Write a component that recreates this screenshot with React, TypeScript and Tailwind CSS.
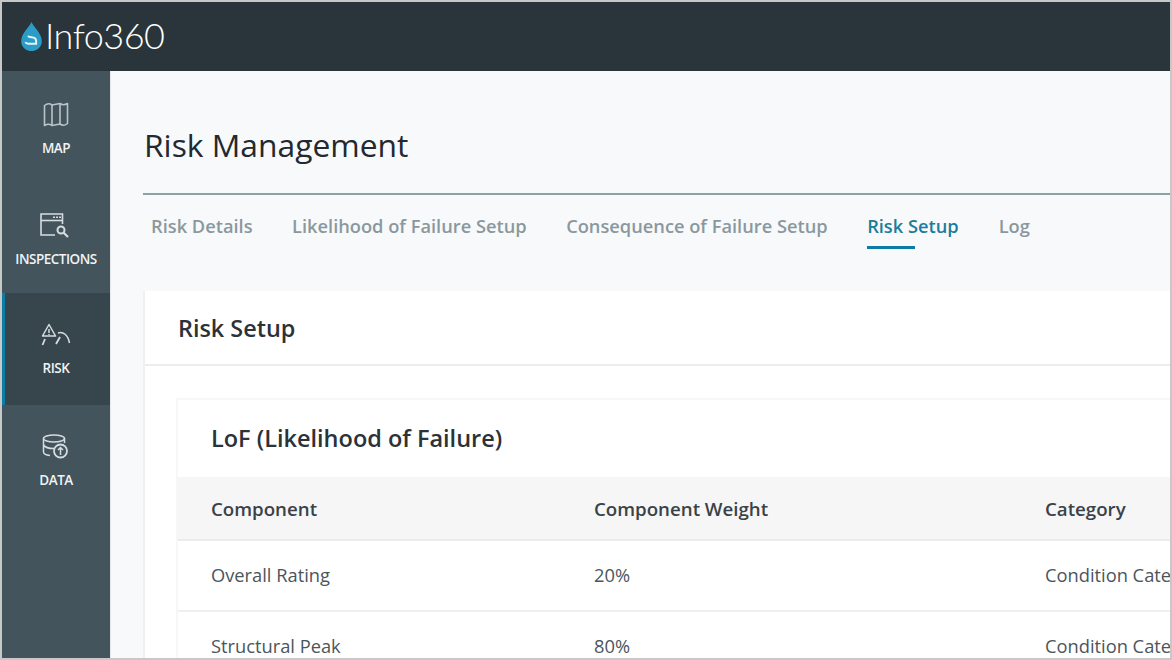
import type { ReactNode } from "react";

const font = { fontFamily: '"Open Sans", "Noto Sans", sans-serif' };

function Drop() {
  return (
    <svg width="23" height="31" viewBox="0 0 22 30" className="shrink-0">
      <path d="M11 1C9 6 1 12 1 19.5C1 25 5.5 29 11 29C16.500 29 21 25 21 19.500C21 12 13 6 11 1Z" fill="#2a9cc6" />
      <path d="M7.500 14.500C9 16 11 15.500 13 16C15 16.500 15.500 18 15.500 19.500V22H8C6.500 22 5.500 21.500 5 20.500" fill="none" stroke="#e8f3f7" strokeWidth="1.800" />
    </svg>
  );
}

function MapIcon() {
  return (
    <svg width="26" height="26" viewBox="0 0 26 26" fill="none" stroke="#b9c4c8" strokeWidth="1.600">
      <path d="M1.500 3.500C4 1.500 7 1.500 9 3L17 1.500C19 3 22 3 24.500 1.500V21.500C22 23.500 19 23.500 17 22L9 23.500C7 22 4 22 1.500 23.500Z" strokeLinejoin="round" />
      <path d="M9 3V23.500M17 1.500V22" />
    </svg>
  );
}

function InspectIcon() {
  return (
    <svg width="30" height="26" viewBox="0 0 30 26" fill="none" stroke="#d5dcdf" strokeWidth="1.600" className="-translate-x-[1px]">
      <path d="M22.500 11V1H1V22H15" />
      <path d="M1 7.500H22.500" />
      <path d="M13 4.200H21" strokeDasharray="2 1" />
      <circle cx="21" cy="17" r="3.500" strokeWidth="2" />
      <path d="M23.500 19.500L28 24" strokeWidth="2.200" />
    </svg>
  );
}

function RiskIcon() {
  return (
    <svg width="30" height="24" viewBox="0 0 30 24" fill="none" stroke="#d5dcdf" strokeWidth="1.500">
      <path d="M8 1.500L14.500 13H1.500Z" strokeLinejoin="round" />
      <path d="M8 6V10M8 11V12" />
      <path d="M17 10C22 8 27 12 28.500 20" />
      <path d="M4 16L1.500 22M19 14L15 21" strokeWidth="1.800" />
    </svg>
  );
}

function DataIcon() {
  return (
    <svg width="28" height="26" viewBox="0 0 28 26" fill="none" stroke="#d5dcdf" strokeWidth="1.500">
      <ellipse cx="12" cy="4.500" rx="10.500" ry="3.500" />
      <path d="M1.500 4.500V18C1.500 19.500 4 21 8 21.500M22.500 4.500V9" />
      <path d="M1.500 11C3 13.500 7 14.500 12 14.500" />
      <circle cx="18.500" cy="17" r="6.500" strokeWidth="1.800" />
      <path d="M18.500 21V14M16 16L18.500 13.500L21 16" />
    </svg>
  );
}

function NavItem({ icon, label, active, className }: { icon: ReactNode; label: string; active?: boolean; className: string }) {
  return (
    <div className={`flex flex-col items-center border-l-[3px] ${active ? "border-[#0b7da6] bg-[#37464d]" : "border-transparent"} ${className}`}>
      <div className="flex h-[26px] items-center pr-[3px]">{icon}</div>
      <span className="mt-[11px] pr-[3px] text-[13.500px] leading-[18px] font-semibold tracking-[-0.5px] text-[#f0f3f4]">{label}</span>
    </div>
  );
}

const tabs = ["Risk Details", "Likelihood of Failure Setup", "Consequence of Failure Setup", "Risk Setup", "Log"];

function Row({ a, b, c, header }: { a: string; b: string; c: string; header?: boolean }) {
  return (
    <div
      className={
        header
          ? "flex h-[64px] shrink-0 items-center border-b-2 border-[#ececec] bg-[#f6f6f6] pt-[2px] text-[18.700px] font-semibold text-[#3a4248]"
          : "flex h-[71px] shrink-0 items-center border-b-2 border-[#f0f0f0] pb-[1px] text-[18.300px] text-[#4c555c]"
      }
    >
      <div className="w-[416px] shrink-0 pl-[33px]">{a}</div>
      <div className="w-[451px] shrink-0">{b}</div>
      <div className="whitespace-nowrap">{c}</div>
    </div>
  );
}

export default function App() {
  return (
    <div style={font} className="flex h-[660px] w-[1172px] flex-col overflow-hidden border-2 border-[#c8c8c8] bg-[#f8f9fb]">
      <header className="flex h-[69px] shrink-0 items-center bg-[#2a343b] pl-[18px]">
        <Drop />
        <span style={{ fontFamily: "Lato, sans-serif" }} className="mb-[4px] ml-[2px] text-[36px] leading-none font-light tracking-[-0.5px] text-white">
          Info360
        </span>
      </header>
      <div className="flex min-h-0 flex-1">
        <nav className="flex w-[109px] shrink-0 flex-col border-r border-[#e6e8ea] bg-[#43545c]">
          <NavItem icon={<MapIcon />} label="MAP" className="h-[111px] pt-[31px]" />
          <NavItem icon={<InspectIcon />} label="INSPECTIONS" className="h-[111px] pt-[31px]" />
          <NavItem icon={<RiskIcon />} label="RISK" active className="h-[112px] pt-[29px]" />
          <NavItem icon={<DataIcon />} label="DATA" className="h-[111px] pt-[29px]" />
        </nav>
        <main className="min-w-0 flex-1 pl-[32px]">
          <h1 className="mt-[52px] pl-[1px] text-[31.800px] leading-[44px] text-[#23292e]">Risk Management</h1>
          <div className="mt-[26px] h-[2px] bg-[#8ea0a6]" />
          <div className="mt-[17px] flex h-[38px] gap-[39.500px] pl-[8px] text-[18.250px] font-semibold whitespace-nowrap text-[#8a989e]">
            {tabs.map((t) => (
              <div key={t} className={t === "Risk Setup" ? "flex w-[92px] flex-col text-[#1b7d9c]" : ""}>
                {t}
                {t === "Risk Setup" && <span className="mt-[7px] h-[3px] w-[48px] bg-[#0b7da6]" />}
              </div>
            ))}
          </div>
          <section className="mt-[41px] border-l-2 border-[#f0f0f0] bg-white">
            <div className="flex h-[75px] items-center border-b-2 border-[#ececec] pt-[3px] pl-[33px]">
              <h2 className="text-[23.400px] font-semibold text-[#2b3238]">Risk Setup</h2>
            </div>
            <div className="mt-[32px] ml-[31px] border-l-2 border-t-2 border-[#f7f7f7]">
              <h3 className="flex h-[77px] items-center pt-[1px] pl-[33px] text-[23.500px] font-semibold text-[#2b3238]">LoF (Likelihood of Failure)</h3>
              <Row header a="Component" b="Component Weight" c="Category" />
              <Row a="Overall Rating" b="20%" c="Condition Category" />
              <Row a="Structural Peak" b="80%" c="Condition Category" />
            </div>
          </section>
        </main>
      </div>
    </div>
  );
}
